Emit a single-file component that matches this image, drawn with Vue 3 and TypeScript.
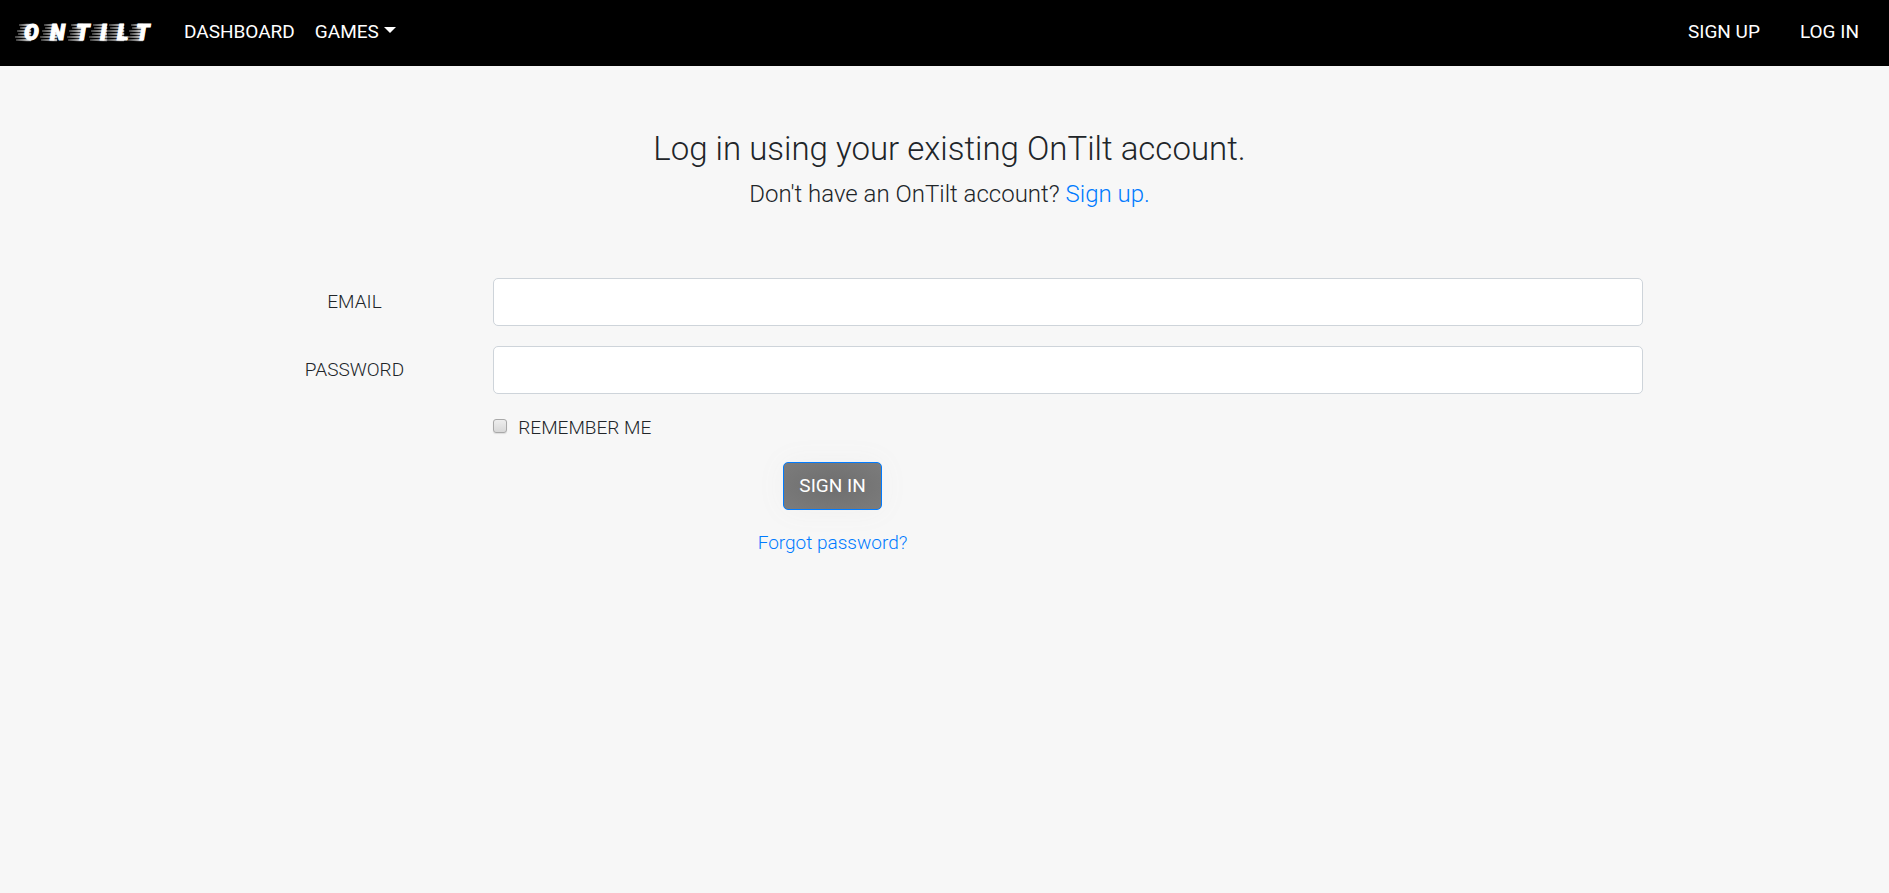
<script setup lang="ts">
import { ref } from 'vue'

const email = ref('')
const password = ref('')
const remember = ref(false)

const letters = [
  { char: 'O', x: 24, from: 14 },
  { char: 'N', x: 50, from: 39 },
  { char: 'T', x: 76, from: 66 },
  { char: 'I', x: 100, from: 88 },
  { char: 'L', x: 117, from: 104 },
  { char: 'T', x: 136, from: 126 },
]

function streaks(from: number, to: number): string {
  const lines: string[] = []
  for (let i = 0; i < 6; i++) {
    const start = from + 5 - i + (i % 2) * 2
    const y = 9 + i * 3
    lines.push(`M${start} ${y}L${to + 3} ${y - 1}H${to + 7}V${y + 1}H${to + 3}Z`)
  }
  return lines.join('')
}
</script>

<template>
  <div class="page">
    <nav class="navbar">
      <a class="brand" href="#" aria-label="OnTilt">
        <svg width="156" height="32" viewBox="0 0 156 32">
          <g v-for="l in letters" :key="l.x">
            <path :d="streaks(l.from, l.x)" class="brand-streaks" />
            <text :x="l.x" y="24" class="brand-letter">{{ l.char }}</text>
          </g>
        </svg>
      </a>
      <a class="nav-link" href="#">DASHBOARD</a>
      <a class="nav-link" href="#">GAMES<span class="caret"></span></a>
      <div class="account">
        <a class="nav-link" href="#">SIGN UP</a>
        <a class="nav-link" href="#">LOG IN</a>
      </div>
    </nav>

    <main>
      <header class="intro">
        <h1>Log in using your existing OnTilt account.</h1>
        <h2>Don't have an OnTilt account? <a href="#">Sign up.</a></h2>
      </header>

      <form class="form" @submit.prevent>
        <label class="name" for="email">EMAIL</label>
        <input id="email" v-model="email" class="field" type="email" />
        <label class="name" for="password">PASSWORD</label>
        <input id="password" v-model="password" class="field" type="password" />
        <label class="remember">
          <input v-model="remember" type="checkbox" />
          REMEMBER ME
        </label>
        <div class="actions">
          <button type="submit">SIGN IN</button>
          <a href="#">Forgot password?</a>
        </div>
      </form>
    </main>
  </div>
</template>

<style>
body {
  background: #f7f7f7;
}
</style>

<style scoped>
.page {
  font-family: Roboto, 'Liberation Sans', sans-serif;
  font-size: 19px;
  font-weight: 300;
  line-height: 30px;
  color: #212529;
}
a {
  color: #007bff;
  text-decoration: none;
}
.navbar {
  display: flex;
  align-items: center;
  box-sizing: border-box;
  height: 66px;
  padding: 0 20px 3px 0;
  background: #000;
}
.brand {
  display: flex;
  margin-right: 18px;
}
.brand-letter {
  font-size: 22px;
  font-weight: 900;
  font-style: italic;
  fill: #fff;
  stroke: #fff;
  stroke-width: 1px;
}
.brand-streaks {
  fill: #d0d0d0;
  stroke: #8c8c8c;
  stroke-width: 0.5px;
}
.nav-link {
  padding: 0 10px;
  font-weight: 400;
  color: #fff;
}
.caret {
  display: inline-block;
  margin-left: 5px;
  vertical-align: 5px;
  border: 6px solid transparent;
  border-top-color: #fff;
  border-bottom: 0;
}
.account {
  display: flex;
  gap: 20px;
  margin-left: auto;
}
.intro {
  padding: 62px 0 68px 10px;
  text-align: center;
}
h1,
h2 {
  margin: 0;
  font-weight: 300;
}
h1 {
  font-size: 33px;
  line-height: 42px;
}
h2 {
  margin-top: 8px;
  font-size: 24px;
  line-height: 32px;
}
.form {
  display: grid;
  grid-template-columns: 2fr 9fr;
  column-gap: 11px;
  row-gap: 20px;
  margin: 0 13% 0 12%;
}
.name {
  align-self: center;
  text-align: center;
}
.field {
  box-sizing: border-box;
  width: 100%;
  height: 48px;
  padding: 8px 15px;
  border: 1px solid #ced4da;
  border-radius: 5px;
  background: #fff;
  font: inherit;
}
.remember {
  display: flex;
  grid-column: 2;
  align-items: center;
  justify-self: start;
  gap: 11px;
  line-height: 28px;
}
.remember input {
  appearance: none;
  width: 14px;
  height: 14px;
  margin: 0 0 4px;
  border: 1px solid #a9a9a9;
  border-radius: 3px;
  background: linear-gradient(#eee, #d8d8d8);
  box-shadow: 0 1px 1px #ddd;
}
.remember input:checked {
  background: #007bff;
}
.actions {
  display: flex;
  flex-direction: column;
  grid-column: 2;
  align-items: center;
  gap: 18px;
  width: 59%;
}
button {
  height: 48px;
  padding: 0 15px;
  border: 1px solid #007bff;
  border-radius: 5px;
  background: radial-gradient(#6e6e6e, #7c7c7c);
  box-shadow: 0 0 30px #f1f1f1;
  font: inherit;
  font-weight: 400;
  color: #fff;
}
</style>
